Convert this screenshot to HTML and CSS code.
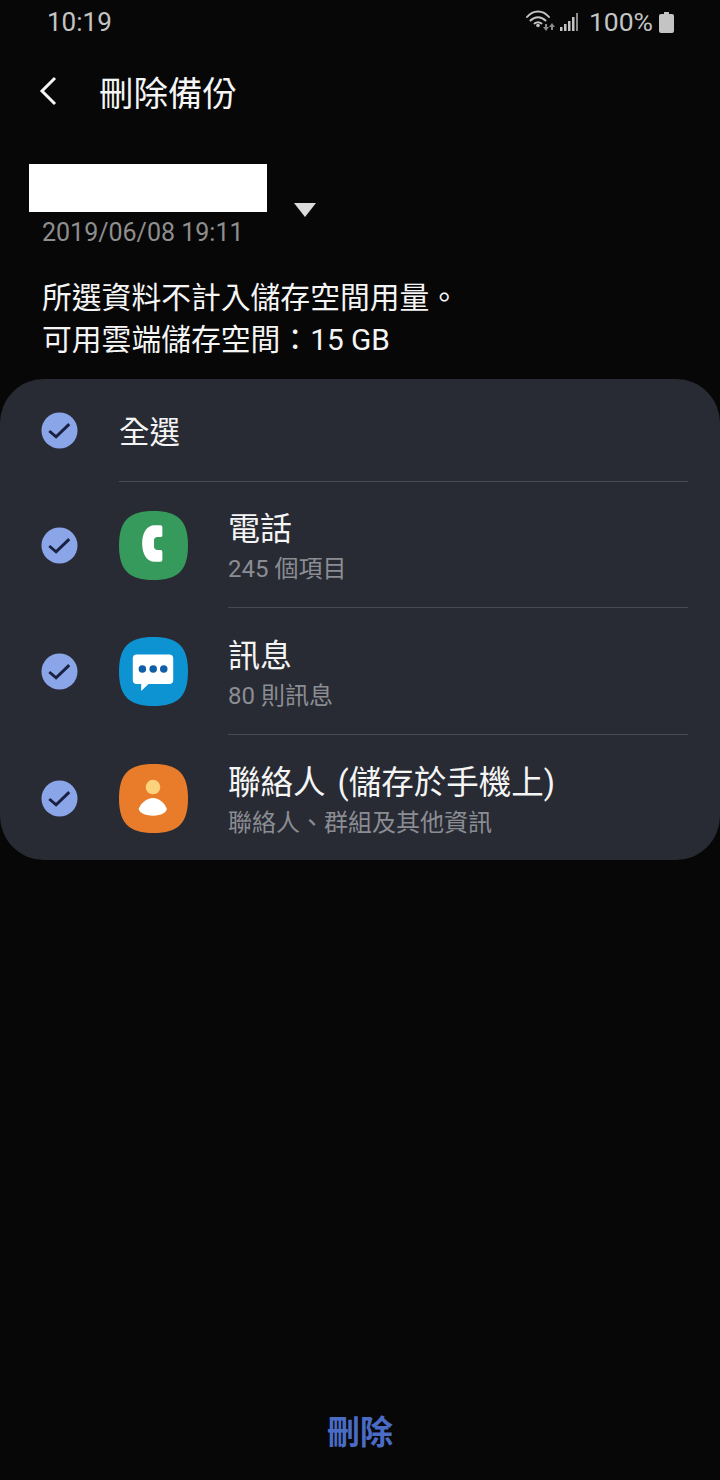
FILE: index.html
```html
<!DOCTYPE html>
<html lang="zh-Hant">
<head>
    <meta charset="UTF-8">
    <meta name="viewport" content="width=device-width, initial-scale=1.0">
    <title>刪除備份</title>
    <link rel="stylesheet" href="styles.css">
</head>
<body>
    <div class="screen">
        <div class="status-bar">
            <span class="clock">10:19</span>
            <div class="status-icons">
                <svg class="wifi" width="31" height="24" viewBox="0 0 31 24">
                    <g fill="none" stroke="#c4c4c4" stroke-width="2" stroke-linecap="round">
                        <path d="M2 7 C8 -0.500 18 -0.500 24 7"/>
                        <path d="M5.500 10.500 C10 6 16 6 20.500 10.500"/>
                        <path d="M9.500 13.500 C11.500 12 14.500 12 16.500 13.500"/>
                    </g>
                    <circle cx="13" cy="15.500" r="1.800" fill="#c4c4c4"/>
                    <path d="M20 14 h2 v3 h2 l-3 4 l-3 -4 h2 Z" fill="#8a8a8a"/>
                    <path d="M27 20 h-2 v-3 h-2 l3 -4 l3 4 h-2 Z" transform="translate(1 0)" fill="#8a8a8a"/>
                </svg>
                <svg class="signal" width="20" height="20" viewBox="0 0 20 20">
                    <rect x="1" y="15" width="2.500" height="4" fill="#c4c4c4"/>
                    <rect x="5" y="12" width="2.500" height="7" fill="#c4c4c4"/>
                    <rect x="9" y="9" width="2.500" height="10" fill="#c4c4c4"/>
                    <rect x="13" y="5" width="2.500" height="14" fill="#c4c4c4"/>
                    <rect x="17" y="1" width="2" height="18" fill="#8a8a8a"/>
                </svg>
                <span class="battery-text">100%</span>
                <svg class="battery" width="15" height="21" viewBox="0 0 15 21">
                    <path d="M5 0 h5 v2 h3 a2 2 0 0 1 2 2 v15 a2 2 0 0 1 -2 2 h-11 a2 2 0 0 1 -2 -2 v-15 a2 2 0 0 1 2 -2 h3 Z" fill="#c4c4c4"/>
                </svg>
            </div>
        </div>

        <div class="app-bar">
            <svg class="back" width="20" height="30" viewBox="0 0 20 30">
                <path d="M17 2 L4 15 L17 28" fill="none" stroke="#f5f5f5" stroke-width="3"/>
            </svg>
            <h1>刪除備份</h1>
        </div>

        <div class="backup-select">
            <div class="backup-info">
                <div class="redacted"></div>
                <div class="backup-date">2019/06/08 19:11</div>
            </div>
            <div class="caret"></div>
        </div>

        <p class="note">所選資料不計入儲存空間用量。<br>可用雲端儲存空間：15 GB</p>

        <div class="card">
            <div class="row row-all">
                <svg class="check" width="37" height="37" viewBox="0 0 38 38">
                    <circle cx="19" cy="19" r="18.500" fill="#8ba5e9"/>
                    <path d="M8.500 19.500 L15.500 25.500 L29 12.500" fill="none" stroke="#1a2140" stroke-width="3"/>
                </svg>
                <div class="row-body all-body">全選</div>
            </div>

            <div class="row">
                <svg class="check" width="37" height="37" viewBox="0 0 38 38">
                    <circle cx="19" cy="19" r="18.500" fill="#8ba5e9"/>
                    <path d="M8.500 19.500 L15.500 25.500 L29 12.500" fill="none" stroke="#1a2140" stroke-width="3"/>
                </svg>
                <svg class="app-icon" width="69" height="69" viewBox="0 0 70 70">
                    <path d="M35 0 C60 0 70 10 70 35 C70 60 60 70 35 70 C10 70 0 60 0 35 C0 10 10 0 35 0 Z" fill="#359a5c"/>
                    <path d="M36 14.500 h6 a2 2 0 0 1 2 2 v8 a2 2 0 0 1 -2 2 h-3 c-2 0 -3.500 1.500 -3.500 3 v7 c0 1.500 1.500 3 3.500 3 h3 a2 2 0 0 1 2 2 v8 a2 2 0 0 1 -2 2 h-6 c-8 0 -12.500 -8 -12.500 -18.500 s4.500 -18.500 12.500 -18.500 Z" fill="#fff"/>
                </svg>
                <div class="row-body">
                    <div class="row-title">電話</div>
                    <div class="row-sub">245 個項目</div>
                </div>
            </div>

            <div class="row row-tall">
                <svg class="check" width="37" height="37" viewBox="0 0 38 38">
                    <circle cx="19" cy="19" r="18.500" fill="#8ba5e9"/>
                    <path d="M8.500 19.500 L15.500 25.500 L29 12.500" fill="none" stroke="#1a2140" stroke-width="3"/>
                </svg>
                <svg class="app-icon" width="69" height="69" viewBox="0 0 70 70">
                    <path d="M35 0 C60 0 70 10 70 35 C70 60 60 70 35 70 C10 70 0 60 0 35 C0 10 10 0 35 0 Z" fill="#0d93d2"/>
                    <path d="M18 17.700 h33 a4 4 0 0 1 4 4 v22 a4 4 0 0 1 -4 4 h-21 l-7.500 7 v-7 h-4.500 a4 4 0 0 1 -4 -4 v-22 a4 4 0 0 1 4 -4 Z" fill="#fff"/>
                    <circle cx="23.700" cy="32.400" r="3.800" fill="#0f5fa8"/>
                    <circle cx="34.700" cy="32.400" r="3.800" fill="#0f5fa8"/>
                    <circle cx="45.400" cy="32.400" r="3.800" fill="#0f5fa8"/>
                </svg>
                <div class="row-body">
                    <div class="row-title">訊息</div>
                    <div class="row-sub">80 則訊息</div>
                </div>
            </div>

            <div class="row">
                <svg class="check" width="37" height="37" viewBox="0 0 38 38">
                    <circle cx="19" cy="19" r="18.500" fill="#8ba5e9"/>
                    <path d="M8.500 19.500 L15.500 25.500 L29 12.500" fill="none" stroke="#1a2140" stroke-width="3"/>
                </svg>
                <svg class="app-icon" width="69" height="69" viewBox="0 0 70 70">
                    <path d="M35 0 C60 0 70 10 70 35 C70 60 60 70 35 70 C10 70 0 60 0 35 C0 10 10 0 35 0 Z" fill="#e87c2b"/>
                    <circle cx="34.500" cy="23.400" r="7.400" fill="#fdd27d"/>
                    <path d="M34.500 34.500 C41 34.500 46.500 40 48.500 45.500 C48.500 49 43 52.500 34.500 52.500 C26 52.500 20 49 20 45.500 C22 40 28 34.500 34.500 34.500 Z" fill="#fff"/>
                </svg>
                <div class="row-body">
                    <div class="row-title row-title-long">聯絡人 (儲存於手機上)</div>
                    <div class="row-sub">聯絡人、群組及其他資訊</div>
                </div>
            </div>
        </div>

        <div class="bottom-action">刪除</div>
    </div>
</body>
</html>
```

FILE: styles.css
```css
body {
    margin: 0;
    background-color: #070707;
    font-family: 'Roboto', 'Noto Sans CJK TC', sans-serif;
    color: #f5f5f5;
}
.screen {
    display: flex;
    flex-direction: column;
    height: 1480px;
    overflow: hidden;
}
.status-bar {
    display: flex;
    justify-content: space-between;
    align-items: center;
    height: 44px;
    padding: 0 46px 0 47px;
    color: #c4c4c4;
    font-size: 26px;
}
.status-icons {
    display: flex;
    align-items: center;
}
.signal {
    margin-left: 3px;
}
.battery-text {
    margin-left: 10px;
    margin-right: 6px;
    margin-top: -2px;
    font-size: 26.5px;
}
.app-bar {
    display: flex;
    align-items: center;
    height: 94px;
    padding: 0 0 2px 38px;
    box-sizing: content-box;
}
.app-bar h1 {
    margin: 0 0 0 41px;
    font-size: 34.5px;
    font-weight: 400;
}
.backup-select {
    display: flex;
    align-items: flex-start;
    margin-top: 24px;
    padding-left: 29px;
}
.redacted {
    width: 238px;
    height: 48px;
    background: #fff;
}
.backup-date {
    margin: 5px 0 0 13px;
    font-size: 25px;
    line-height: 32px;
    color: #8e8e8e;
}
.caret {
    width: 0;
    height: 0;
    margin: 39px 0 0 27px;
    border-left: 11px solid transparent;
    border-right: 11px solid transparent;
    border-top: 14px solid #dcdcdc;
}
.note {
    margin: 28px 0 0 42px;
    font-size: 29.8px;
    line-height: 42px;
}
.card {
    margin-top: 18px;
    height: 481px;
    box-sizing: border-box;
    background: #282b33;
    border-radius: 44px;
    padding-right: 32px;
}
.row {
    display: flex;
    align-items: center;
    height: 126px;
    padding-left: 41px;
}
.row-all {
    height: 103px;
}
.row-tall {
    height: 127px;
}
.check {
    flex: none;
    margin-right: 41px;
}
.app-icon {
    flex: none;
    margin-right: 40px;
}
.row-body {
    flex: 1;
    align-self: stretch;
    display: flex;
    flex-direction: column;
    justify-content: center;
    box-sizing: border-box;
    padding-top: 4px;
    border-bottom: 1px solid #484b54;
}
.row:last-child .row-body {
    border-bottom: none;
}
.all-body {
    padding-top: 0;
    font-size: 30.4px;
}
.row-title {
    font-size: 32px;
    line-height: 42px;
}
.row-title-long {
    font-size: 32.5px;
    word-spacing: 4px;
}
.row-sub {
    margin-top: 3px;
    font-size: 24px;
    line-height: 32px;
    color: #8b8d93;
}
.bottom-action {
    margin-top: auto;
    margin-bottom: 26px;
    text-align: center;
    font-size: 33px;
    font-weight: 700;
    color: #4a6cc4;
}
```
